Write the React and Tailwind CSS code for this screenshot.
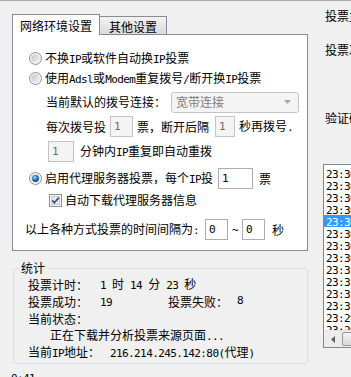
import React from 'react';

// half-width latin text, like the SimSun latin glyphs of the dialog
function L({ children }) {
  return (
    <span className="font-['DejaVu_Sans_Mono',monospace] text-[11px] tracking-[-0.6px] whitespace-pre">
      {children}
    </span>
  );
}

function Radio({ checked }) {
  return (
    <svg width="13" height="13" viewBox="0 0 13 13" className="shrink-0">
      <defs>
        <linearGradient id="radioFill" x1="0" y1="0" x2="1" y2="1">
          <stop offset="0" stopColor="#c4c4c4" />
          <stop offset="1" stopColor="#f7f7f7" />
        </linearGradient>
        <radialGradient id="radioDot" cx="0.4" cy="0.35" r="0.65">
          <stop offset="0" stopColor="#b5e0ff" />
          <stop offset="0.45" stopColor="#3a8ae0" />
          <stop offset="1" stopColor="#0c3b80" />
        </radialGradient>
      </defs>
      <circle cx="6.5" cy="6.5" r="6" fill="#f4f4f4" stroke="#8f9091" />
      <circle cx="6.5" cy="6.5" r="4.3" fill="url(#radioFill)" />
      {checked && <circle cx="6.5" cy="6.5" r="3.4" fill="url(#radioDot)" />}
    </svg>
  );
}

function Check() {
  return (
    <svg width="13" height="13" viewBox="0 0 13 13" className="shrink-0">
      <rect x="0.5" y="0.5" width="12" height="12" fill="#f6f6f6" stroke="#8f9091" />
      <rect x="2.5" y="2.5" width="8" height="8" fill="#e4e7ec" stroke="#c6ccd6" />
      <path d="M3.2 6.4 L5.4 8.8 L9.8 3.6" stroke="#3b4d84" strokeWidth="1.7" fill="none" />
    </svg>
  );
}

function Box({ w, v, disabled }) {
  return (
    <div
      className={`${w} h-[21px] shrink-0 border flex items-center pl-[3px] ${
        disabled ? 'border-[#c2c4c7] bg-[#f4f4f4] text-[#6d6d6d]' : 'border-[#abadb3] bg-white text-black'
      }`}
    >
      <L>{v}</L>
    </div>
  );
}

const logs = [
  '23:36:58 投票成功', '23:36:51 投票成功', '23:36:44 投票失败', '23:36:37 投票成功',
  '23:36:30 投票成功', '23:36:22 投票成功', '23:36:15 投票失败', '23:36:08 投票成功',
  '23:35:59 投票成功', '23:35:50 投票成功', '23:35:42 投票失败', '23:35:33 投票成功',
  '23:29:41 投票成功', '23:29:30 投票成功',
];

export default function App() {
  return (
    <div className="w-[351px] h-[377px] overflow-hidden bg-[#f0f0f0] border-t border-[#a9a9a9] flex font-['Noto_Sans_CJK_SC',sans-serif] text-[12px] text-black">
      {/* left column */}
      <div className="w-[308px] shrink-0 pl-[12px] pt-[13px]">
        {/* tabs */}
        <div className="flex items-end h-[20px]">
          <div className="relative z-10 w-[88px] h-[21px] -mb-px border border-b-0 border-[#898c95] bg-white flex items-center justify-center leading-none pt-[2px]">
            网络环境设置
          </div>
          <div className="w-[67px] h-[18px] border border-l-0 border-b-0 border-[#898c95] bg-gradient-to-b from-[#f3f3f3] to-[#dadada] flex items-center justify-center leading-none pt-[2px]">
            其他设置
          </div>
        </div>

        {/* tab panel */}
        <div className="w-[296px] h-[217px] border border-[#898c95] bg-white pt-[13px] leading-none">
          <div className="flex items-center h-[20px] pl-[16px] gap-[3px]">
            <Radio />
            <span>不换<L>IP</L>或软件自动换<L>IP</L>投票</span>
          </div>
          <div className="flex items-center h-[20px] pl-[16px] gap-[3px]">
            <Radio />
            <span>使用<L>Adsl</L>或<L>Modem</L>重复拨号<L>/</L>断开换<L>IP</L>投票</span>
          </div>
          <div className="mt-[4px] flex items-center h-[20px] pl-[33px]">
            <span className="w-[125px] shrink-0">当前默认的拨号连接：</span>
            <div className="w-[128px] h-[21px] rounded-[3px] border border-[#c2c4c7] bg-[#f4f4f4] flex items-center justify-between pl-[4px] pr-[7px] text-[#7d7d7d]">
              <span>宽带连接</span>
              <svg width="7" height="4" viewBox="0 0 7 4">
                <path d="M0 0 H7 L3.5 4 Z" fill="#a7a7a7" />
              </svg>
            </div>
          </div>
          <div className="mt-[4px] flex items-center h-[21px] pl-[33px]">
            <span className="w-[64px] shrink-0">每次拨号投</span>
            <Box w="w-[23px]" v="1" disabled />
            <span className="w-[82px] shrink-0 pl-[4px]">票，断开后隔</span>
            <Box w="w-[20px]" v="1" disabled />
            <span className="pl-[4px]">秒再拨号<L>.</L></span>
          </div>
          <div className="mt-[4px] flex items-center h-[21px] pl-[35px]">
            <Box w="w-[26px]" v="1" disabled />
            <span className="pl-[6px]">分钟内<L>IP</L>重复即自动重拨</span>
          </div>
          <div className="mt-[6px] flex items-center h-[21px] pl-[16px]">
            <Radio checked />
            <span className="w-[176px] shrink-0 pl-[3px]">启用代理服务器投票，每个<L>IP</L>投</span>
            <Box w="w-[35px]" v="1" />
            <span className="pl-[6px]">票</span>
          </div>
          <div className="mt-[1px] flex items-center h-[20px] pl-[36px] gap-[3px]">
            <Check />
            <span>自动下载代理服务器信息</span>
          </div>
          <div className="mt-[9px] flex items-center h-[21px] pl-[12px]">
            <span className="w-[180px] shrink-0">以上各种方式投票的时间间隔为<L>:</L></span>
            <Box w="w-[23px]" v="0" />
            <span className="w-[14px] shrink-0 text-center"><L>~</L></span>
            <Box w="w-[23px]" v="0" />
            <span className="pl-[7px]">秒</span>
          </div>
        </div>

        {/* statistics group */}
        <div className="relative mt-[17px] ml-px w-[295px] h-[96px] border border-[#d5dfe5] rounded-[3px] pl-[14px] pt-[7px]">
          <span className="absolute -top-[9px] left-[5px] h-[16px] leading-[16px] px-[2px] bg-[#f0f0f0]">统计</span>
          <div className="h-[17px] flex items-center">
            <span className="w-[72px] shrink-0">投票计时：</span>
            <span><L>1 </L>时<L> 14 </L>分<L> 23 </L>秒</span>
          </div>
          <div className="h-[17px] flex items-center">
            <span className="w-[72px] shrink-0">投票成功：</span>
            <span className="w-[68px] shrink-0"><L>19</L></span>
            <span className="w-[69px] shrink-0">投票失败：</span>
            <L>8</L>
          </div>
          <div className="h-[17px] flex items-center">当前状态：</div>
          <div className="h-[17px] flex items-center pl-[22px]">
            <span>正在下载并分析投票来源页面<L>...</L></span>
          </div>
          <div className="h-[17px] flex items-center">
            <span className="w-[82px] shrink-0">当前<L>IP</L>地址：</span>
            <span><L>216.214.245.142:80(</L>代理<L>)</L></span>
          </div>
        </div>

        <div className="mt-[6px] -ml-px leading-[14px]">
          <L>0:41</L>
        </div>
      </div>

      {/* right column (cut off) */}
      <div className="flex-1 min-w-0 overflow-hidden whitespace-nowrap">
        <div className="mt-[7px] pl-[17px] h-[16px] leading-[16px]">投票主题：</div>
        <div className="mt-[18px] pl-[17px] h-[16px] leading-[16px]">投票次数：</div>
        <div className="mt-[52px] pl-[17px] h-[16px] leading-[16px]">验证码：</div>
        <div className="mt-[38px] ml-[15px] w-[80px] h-[184px] border border-[#828790] bg-white flex flex-col">
          <div className="h-[165px] overflow-hidden pt-[2px]">
            {logs.map((t, i) => (
              <div
                key={i}
                className={`h-[12px] leading-[12px] pl-[2px] ${i === 4 ? 'bg-[#3399ff] text-white' : ''}`}
              >
                <L>{t.slice(0, 8)}</L> {t.slice(9)}
              </div>
            ))}
          </div>
          <div className="h-[17px] bg-[#ececec] flex items-stretch border-t border-[#e2e2e2]">
            <div className="w-[17px] flex items-center justify-center">
              <svg width="4" height="7" viewBox="0 0 4 7">
                <path d="M4 0 V7 L0 3.5 Z" fill="#606060" />
              </svg>
            </div>
            <div className="flex-1 my-[1px] ml-px rounded-[2px] border border-[#9a9a9a] bg-gradient-to-b from-[#f4f4f4] to-[#d8d8d8]" />
          </div>
        </div>
      </div>
    </div>
  );
}
